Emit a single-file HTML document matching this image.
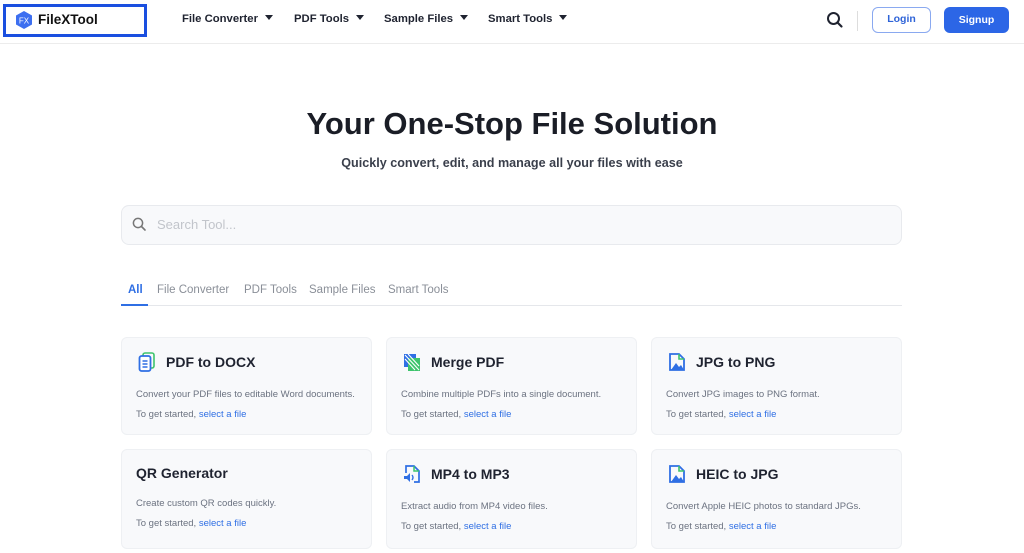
<!DOCTYPE html>
<html><head><meta charset="utf-8"><style>
*{box-sizing:border-box;margin:0;padding:0}
body{width:1024px;height:553px;overflow:hidden;background:#fff;font-family:"Liberation Sans",sans-serif;color:#1f2330;position:relative}
.a{position:absolute;white-space:nowrap}
.hdr{position:absolute;left:0;top:0;width:1024px;height:44px;border-bottom:1px solid #ececec}
.nav{font-size:11.3px;font-weight:bold;color:#1f2330;top:13px}
.nav:after{content:"";display:inline-block;margin-left:7px;border-left:4px solid transparent;border-right:4px solid transparent;border-top:5px solid #1f2330;vertical-align:2px}
.card{position:absolute;width:251px;background:#f8f9fb;border:1px solid #eef0f3;border-radius:6px}
.card h3{position:absolute;left:44px;top:16px;font-size:14px;font-weight:bold;color:#1f2330}
.card .d{position:absolute;left:14px;font-size:9.5px;color:#6b7280;white-space:nowrap}
.card .d span{color:#2f6fe4}
.card svg{position:absolute;left:16px;top:14px}
.tab{top:284px;font-size:11.5px;color:#8a8f98}
</style></head><body>
<div class="hdr"></div>
<div class="a" style="left:3px;top:4px;width:144px;height:33px;border:3px solid #1a4fe0"></div>
<svg class="a" style="left:14px;top:10px" width="20" height="20" viewBox="0 0 20 20"><polygon points="10,1 18,5.5 18,14.5 10,19 2,14.5 2,5.5" fill="#3d6ff0"/><text x="10" y="13.5" font-size="8" fill="#fff" text-anchor="middle" font-family="Liberation Sans">FX</text></svg>
<div class="a" style="left:38px;top:12px;font-size:13.5px;font-weight:bold;color:#111">FileXTool</div>
<div class="a nav" style="left:182px">File Converter</div>
<div class="a nav" style="left:294px">PDF Tools</div>
<div class="a nav" style="left:384px">Sample Files</div>
<div class="a nav" style="left:488px">Smart Tools</div>
<svg class="a" style="left:826px;top:11px" width="18" height="18" viewBox="0 0 18 18"><circle cx="7.5" cy="7.5" r="5.5" fill="none" stroke="#1f2330" stroke-width="2"/><line x1="11.5" y1="11.5" x2="15.5" y2="15.5" stroke="#1f2330" stroke-width="2.2" stroke-linecap="round"/></svg>
<div class="a" style="left:857px;top:11px;width:1px;height:20px;background:#ddd"></div>
<div class="a" style="left:872px;top:7px;width:59px;height:26px;border:1.5px solid #8aa9f0;border-radius:6px;color:#2f64d8;font-size:10.5px;font-weight:bold;text-align:center;line-height:23px">Login</div>
<div class="a" style="left:944px;top:7px;width:65px;height:26px;background:#2c66e6;border-radius:6px;color:#fff;font-size:10.5px;font-weight:bold;text-align:center;line-height:26px">Signup</div>
<div class="a" style="left:0;width:1024px;top:106px;text-align:center;font-size:31px;font-weight:bold;color:#1a1d26">Your One-Stop File Solution</div>
<div class="a" style="left:0;width:1024px;top:156px;text-align:center;font-size:12.6px;font-weight:bold;color:#3a3f4b">Quickly convert, edit, and manage all your files with ease</div>
<div class="a" style="left:121px;top:205px;width:781px;height:40px;background:#f8f9fb;border:1px solid #e8eaee;border-radius:8px"></div>
<svg class="a" style="left:132px;top:217px" width="15" height="15" viewBox="0 0 15 15"><circle cx="6" cy="6" r="4.6" fill="none" stroke="#777" stroke-width="1.5"/><line x1="9.5" y1="9.5" x2="13" y2="13" stroke="#777" stroke-width="1.6" stroke-linecap="round"/></svg>
<div class="a" style="left:157px;top:217px;font-size:13px;color:#c2c5cb">Search Tool...</div>
<div class="a tab" style="left:128px;color:#2f6fe4;font-weight:bold">All</div>
<div class="a tab" style="left:157px">File Converter</div>
<div class="a tab" style="left:244px">PDF Tools</div>
<div class="a tab" style="left:309px">Sample Files</div>
<div class="a tab" style="left:388px">Smart Tools</div>
<div class="a" style="left:121px;top:305px;width:781px;height:1px;background:#e5e7eb"></div>
<div class="a" style="left:121px;top:304px;width:27px;height:2px;background:#2f6fe4"></div>

<div class="card" style="left:121px;top:337px;height:98px"><svg width="18" height="20" viewBox="0 0 18 20"><rect x="5" y="1" width="11" height="15" rx="2" fill="none" stroke="#3ec46d" stroke-width="1.6"/><rect x="1.5" y="4" width="11" height="15" rx="2" fill="#fff" stroke="#2f6fe4" stroke-width="1.8"/><path d="M4.5 9h5M4.5 12h5M4.5 15h5" stroke="#2f6fe4" stroke-width="1.4"/></svg><h3>PDF to DOCX</h3><div class="d" style="top:51px">Convert your PDF files to editable Word documents.</div><div class="d" style="top:71px">To get started, <span>select a file</span></div></div>
<div class="card" style="left:386px;top:337px;height:98px"><svg width="18" height="20" viewBox="0 0 18 20"><rect x="1" y="2" width="12" height="13" fill="#2f6fe4"/><rect x="5" y="6" width="12" height="13" fill="#3ec46d"/><path d="M2 3l14 15M5 2l11 12M2 7l10 11" stroke="#fff" stroke-width="1.1"/></svg><h3>Merge PDF</h3><div class="d" style="top:51px">Combine multiple PDFs into a single document.</div><div class="d" style="top:71px">To get started, <span>select a file</span></div></div>
<div class="card" style="left:651px;top:337px;height:98px"><svg width="18" height="20" viewBox="0 0 18 20"><path d="M2 18V2h9l5 5v11z" fill="none" stroke="#2f6fe4" stroke-width="1.8"/><path d="M11 2v5h5" fill="none" stroke="#3ec46d" stroke-width="1.6"/><path d="M3 18l5-7 3 4 2-2 3 5z" fill="#2f6fe4"/></svg><h3>JPG to PNG</h3><div class="d" style="top:51px">Convert JPG images to PNG format.</div><div class="d" style="top:71px">To get started, <span>select a file</span></div></div>
<div class="card" style="left:121px;top:449px;height:100px"><h3 style="left:14px;top:15px">QR Generator</h3><div class="d" style="top:48px">Create custom QR codes quickly.</div><div class="d" style="top:68px">To get started, <span>select a file</span></div></div>
<div class="card" style="left:386px;top:449px;height:100px"><svg width="18" height="20" viewBox="0 0 18 20"><path d="M3 9V2h8l5 5v11h-5" fill="none" stroke="#2f6fe4" stroke-width="1.7"/><path d="M11 2v5h5" fill="none" stroke="#3ec46d" stroke-width="1.5"/><path d="M1 12h3l3-3v9l-3-3H1z" fill="#2f6fe4"/><path d="M9 11q2 2.5 0 5" fill="none" stroke="#2f6fe4" stroke-width="1.4"/></svg><h3>MP4 to MP3</h3><div class="d" style="top:51px">Extract audio from MP4 video files.</div><div class="d" style="top:71px">To get started, <span>select a file</span></div></div>
<div class="card" style="left:651px;top:449px;height:100px"><svg width="18" height="20" viewBox="0 0 18 20"><path d="M2 18V2h9l5 5v11z" fill="none" stroke="#2f6fe4" stroke-width="1.8"/><path d="M11 2v5h5" fill="none" stroke="#3ec46d" stroke-width="1.6"/><path d="M3 18l5-7 3 4 2-2 3 5z" fill="#2f6fe4"/></svg><h3>HEIC to JPG</h3><div class="d" style="top:51px">Convert Apple HEIC photos to standard JPGs.</div><div class="d" style="top:71px">To get started, <span>select a file</span></div></div>
</body></html>
